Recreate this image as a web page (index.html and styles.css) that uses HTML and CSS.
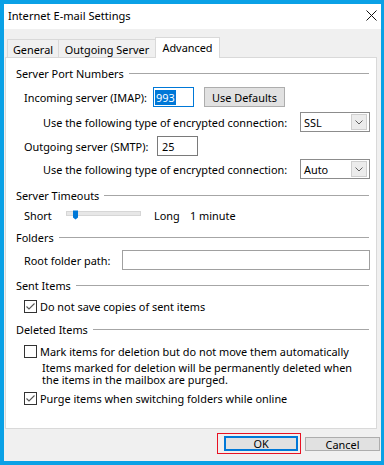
FILE: index.html
```html
<!DOCTYPE html>
<html lang="en">
<head>
<meta charset="utf-8">
<title>Internet E-mail Settings</title>
<link rel="stylesheet" href="styles.css">
</head>
<body>
<div class="window">
  <div class="titlebar">
    <span class="title">Internet E-mail Settings</span>
    <svg class="close" width="11" height="11" viewBox="0 0 11 11"><path d="M0.5 0.5L10.5 10.5M10.5 0.5L0.5 10.5" stroke="#111" stroke-width="1" fill="none"/></svg>
  </div>
  <div class="client">
    <div class="tabs">
      <div class="tab t1">General</div>
      <div class="tab t2">Outgoing Server</div>
      <div class="tab t3 active">Advanced</div>
    </div>
    <div class="panel">
      <div class="gh m8"><span>Server Port Numbers</span></div>
      <div class="row h20 m7">
        <span class="lbl w129">Incoming server (IMAP):</span>
        <div class="input focus w41"><span class="sel">993</span></div>
        <button class="btn defaults">Use Defaults</button>
      </div>
      <div class="row h20 m5">
        <span class="enc">Use the following type of encrypted connection:</span>
        <div class="combo"><span class="cv">SSL</span><span class="arrow"><svg width="8" height="5" viewBox="0 0 8 5"><path d="M0.5 0.5L4 4L7.5 0.5" stroke="#606060" fill="none" stroke-width="1"/></svg></span></div>
      </div>
      <div class="row h20 m4">
        <span class="lbl w133">Outgoing server (SMTP):</span>
        <div class="input w41 smtp">25</div>
      </div>
      <div class="row h20 m3">
        <span class="enc">Use the following type of encrypted connection:</span>
        <div class="combo"><span class="cv">Auto</span><span class="arrow"><svg width="8" height="5" viewBox="0 0 8 5"><path d="M0.5 0.5L4 4L7.5 0.5" stroke="#606060" fill="none" stroke-width="1"/></svg></span></div>
      </div>

      <div class="gh m9"><span>Server Timeouts</span></div>
      <div class="row h14 m6">
        <span class="lbl w42">Short</span>
        <svg class="slider" width="75" height="14" viewBox="0 0 75 14">
          <rect x="0.5" y="3.5" width="74" height="4" fill="#e7e7e7" stroke="#d6d6d6"/>
          <path d="M7 2.5H12V9.5L9.5 11.5L7 9.5Z" fill="#0078d7"/>
        </svg>
        <span class="long">Long</span>
        <span>1 minute</span>
      </div>

      <div class="gh m8"><span>Folders</span></div>
      <div class="row h20 m6">
        <span class="lbl w98">Root folder path:</span>
        <div class="input root"></div>
      </div>

      <div class="gh m8"><span>Sent Items</span></div>
      <div class="row h14 m7">
        <svg class="cb" width="13" height="13" viewBox="0 0 13 13"><rect x="0.5" y="0.5" width="12" height="12" fill="#fff" stroke="#333"/><path d="M2.5 6.5L5 9L10.5 3.5" stroke="#555" stroke-width="1.1" fill="none"/></svg>
        <span>Do not save copies of sent items</span>
      </div>

      <div class="gh m9"><span>Deleted Items</span></div>
      <div class="row h14 m8">
        <svg class="cb" width="13" height="13" viewBox="0 0 13 13"><rect x="0.5" y="0.5" width="12" height="12" fill="#fff" stroke="#333"/></svg>
        <span>Mark items for deletion but do not move them automatically</span>
      </div>
      <p class="note m4">Items marked for deletion will be permanently deleted when<br>the items in the mailbox are purged.</p>
      <div class="row h14 m5">
        <svg class="cb" width="13" height="13" viewBox="0 0 13 13"><rect x="0.5" y="0.5" width="12" height="12" fill="#fff" stroke="#333"/><path d="M2.5 6.5L5 9L10.5 3.5" stroke="#555" stroke-width="1.1" fill="none"/></svg>
        <span>Purge items when switching folders while online</span>
      </div>
    </div>
    <div class="footer">
      <div class="focusmark"><button class="btn ok">OK</button></div>
      <button class="btn cancel">Cancel</button>
    </div>
  </div>
</div>
</body>
</html>
```
FILE: styles.css
```css
* { box-sizing: border-box; }
html, body { margin: 0; padding: 0; }
body {
  font-family: "Noto Sans", "Open Sans", sans-serif;
  font-size: 10.9px;
  color: #000;
  background: #fff;
}
.window {
  width: 384px;
  height: 465px;
  border: 4px solid #0aa1e6;
  border-right-width: 3px;
  display: flex;
  flex-direction: column;
  background: #f0f0f0;
}
.titlebar {
  height: 25px;
  flex: none;
  background: #fff;
  display: flex;
  align-items: center;
  justify-content: space-between;
  padding: 0 4px 3px 4px;
}
.title { font-size: 11.1px; }
.client {
  flex: 1;
  display: flex;
  flex-direction: column;
}
.tabs {
  display: flex;
  align-items: flex-end;
  height: 20px;
  margin-top: 8px;
  padding-left: 3px;
  position: relative;
  z-index: 1;
}
.tab {
  height: 18px;
  border: 1px solid #d9d9d9;
  border-bottom: 0;
  background: #f0f0f0;
  display: flex;
  align-items: center;
  justify-content: center;
  padding-top: 1px;
}
.tab + .tab { margin-left: -1px; }
.t1 { width: 52px; }
.t2 { width: 98px; }
.t3 { width: 65px; }
.tab.active {
  height: 21px;
  margin-bottom: -1px;
  background: #fff;
  padding-top: 0;
  padding-bottom: 2px;
}
.panel {
  margin-left: 1px;
  width: 372px;
  height: 372px;
  border: 1px solid #d9d9d9;
  background: #fff;
  padding: 0 7px 0 10px;
}
.gh {
  display: flex;
  align-items: center;
  height: 14px;
}
.gh::after {
  content: "";
  flex: 1;
  height: 1px;
  background: #a6a6a6;
  margin-left: 5px;
}
.m3 { margin-top: 3px; }
.m4 { margin-top: 4px; }
.m5 { margin-top: 5px; }
.m6 { margin-top: 6px; }
.m7 { margin-top: 7px; }
.m8 { margin-top: 8px; }
.m9 { margin-top: 9px; }
.row {
  display: flex;
  align-items: center;
  margin-left: 8px;
  white-space: nowrap;
}
.h20 { height: 20px; }
.h14 { height: 14px; }
.lbl { flex: none; }
.w129 { width: 129px; }
.w133 { width: 133px; }
.w42 { width: 42px; }
.w98 { width: 98px; }
.w41 { width: 41px; }
.input {
  height: 20px;
  border: 1px solid #7a7a7a;
  background: #fff;
  display: flex;
  align-items: center;
  padding-left: 1px;
}
.input.focus { border-color: #0078d7; }
.sel {
  background: #0078d7;
  color: #fff;
  height: 15px;
  line-height: 15px;
  padding: 0 1px;
}
.smtp { padding-left: 4px; }
.root {
  flex: 1;
  margin-right: -1px;
  border-color: #a0a0a0;
}
.btn {
  font: inherit;
  color: #000;
  background: #e1e1e1;
  border: 1px solid #adadad;
  padding: 0;
  margin: 0;
  display: flex;
  align-items: center;
  justify-content: center;
}
.defaults {
  width: 81px;
  height: 20px;
  margin-left: 10px;
}
.enc { margin-left: 19px; }
.combo {
  margin-left: auto;
  margin-right: -1px;
  width: 70px;
  height: 20px;
  border: 1px solid #8c8c8c;
  background: #fff;
  display: flex;
  align-items: center;
  justify-content: space-between;
  padding: 0 2px 0 3px;
}
.arrow {
  width: 16px;
  height: 16px;
  border: 1px solid #cfcfcf;
  background: #ececec;
  display: flex;
  align-items: center;
  justify-content: center;
}
.slider { flex: none; }
.long { margin-left: 13px; width: 36px; }
.cb { flex: none; margin-right: 3px; }
.note {
  margin-bottom: 0;
  margin-left: 26px;
  line-height: 12px;
  height: 24px;
}
.footer {
  display: flex;
  justify-content: flex-end;
  align-items: flex-start;
  padding: 4px 1px 0 0;
  gap: 4px;
}
.focusmark {
  border: 1px solid #e81123;
  padding: 2px 2px 2px 6px;
}
.ok {
  width: 74px;
  height: 15px;
  border: 2px solid #0078d7;
}
.cancel {
  width: 75px;
  height: 14px;
  margin-top: 4px;
}
```
